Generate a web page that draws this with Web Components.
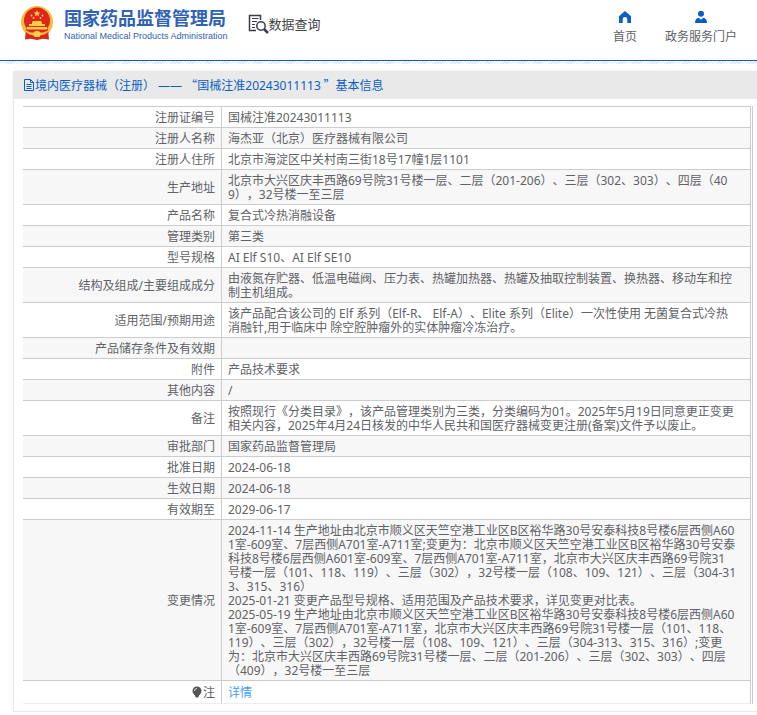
<!DOCTYPE html>
<html lang="zh-CN">
<head>
<meta charset="utf-8">
<meta name="viewport" content="width=device-width, initial-scale=1">
<title>国家药品监督管理局 数据查询</title>
<style>
	body {
		margin: 0;
		background: #fff;
		color: #606266;
		font: 12px/14px "Noto Sans", "Noto Sans CJK SC", sans-serif;
		text-spacing-trim: space-all;
	}
</style>
</head>
<body>
<site-header>
	<nav-link slot="nav" href="#home">
		<svg slot="icon" viewBox="0 0 14 14" width="14" height="14" fill="#0a5fc4"><path d="M7 1 1 6.2V13h3.7V9.3a2.3 2.3 0 0 1 4.6 0V13H13V6.2z"/></svg>
		首页
	</nav-link>
	<nav-link slot="nav" href="#portal">
		<svg slot="icon" viewBox="0 0 14 14" width="14" height="14" fill="#0a5fc4"><circle cx="7" cy="3.800" r="3"/><path d="M1 13c0-3.200 1.500-4.800 3.800-5.200L7 9.800l2.200-2C11.500 8.200 13 9.800 13 13z"/></svg>
		政务服务门户
	</nav-link>
</site-header>
<info-panel>
	<span slot="title">境内医疗器械（注册） —— <q-mark>“</q-mark>国械注准20243011113<q-mark>”</q-mark>基本信息</span>
	<info-table></info-table>
</info-panel>

<script>
const ROWS = [
	['注册证编号', '国械注准20243011113'],
	['注册人名称', '海杰亚（北京）医疗器械有限公司'],
	['注册人住所', '北京市海淀区中关村南三街18号17幢1层1101'],
	['生产地址', '北京市大兴区庆丰西路69号院31号楼一层、二层（201-206）、三层（302、303）、四层（409），32号楼一至三层'],
	['产品名称', '复合式冷热消融设备'],
	['管理类别', '第三类'],
	['型号规格', 'AI Elf S10、AI Elf SE10'],
	['结构及组成/主要组成成分', `由液氮存贮器、低温电磁阀、压力表、热罐加热器、热罐及抽取控制装置、换热器、移动车和控
制主机组成。`],
	['适用范围/预期用途', `该产品配合该公司的 Elf 系列（Elf-R、 Elf-A）、Elite 系列（Elite）一次性使用 无菌复合式冷热
消融针,用于临床中 除空腔肿瘤外的实体肿瘤冷冻治疗。`],
	['产品储存条件及有效期', ''],
	['附件', '产品技术要求'],
	['其他内容', '/'],
	['备注', `按照现行《分类目录》，该产品管理类别为三类，分类编码为01。2025年5月19日同意更正变更
相关内容，2025年4月24日核发的中华人民共和国医疗器械变更注册(备案)文件予以废止。`],
	['审批部门', '国家药品监督管理局'],
	['批准日期', '2024-06-18'],
	['生效日期', '2024-06-18'],
	['有效期至', '2029-06-17'],
	['变更情况', `2024-11-14 生产地址由北京市顺义区天竺空港工业区B区裕华路30号安泰科技8号楼6层西侧A60
1室-609室、7层西侧A701室-A711室;变更为：北京市顺义区天竺空港工业区B区裕华路30号安泰
科技8号楼6层西侧A601室-609室、7层西侧A701室-A711室，北京市大兴区庆丰西路69号院31
号楼一层（101、118、119）、三层（302），32号楼一层（108、109、121）、三层（304-31
3、315、316）
2025-01-21 变更产品型号规格、适用范围及产品技术要求，详见变更对比表。
2025-05-19 生产地址由北京市顺义区天竺空港工业区B区裕华路30号安泰科技8号楼6层西侧A60
1室-609室、7层西侧A701室-A711室，北京市大兴区庆丰西路69号院31号楼一层（101、118、
119）、三层（302），32号楼一层（108、109、121）、三层（304-313、315、316）;变更
为：北京市大兴区庆丰西路69号院31号楼一层、二层（201-206）、三层（302、303）、四层
（409），32号楼一至三层`],
];

// full-width quotation mark, always taken from the CJK font
class QMark extends HTMLElement {
	constructor() {
		super();
		this.attachShadow({ mode: 'open' }).innerHTML = `
    <style>
      :host { font-family: "Noto Sans CJK SC", sans-serif; }
    </style>
    <slot></slot>`;
	}
}

class NavLink extends HTMLElement {
	constructor() {
		super();
		this.attachShadow({ mode: 'open' }).innerHTML = `
    <style>
      :host { display: block; }

      a {
        display: flex;
        flex-direction: column;
        align-items: center;
        gap: 5px;
        color: inherit;
        line-height: 16px;
        text-decoration: none;
      }

      a:hover { color: #0a5fc4; }
    </style>
    <a><slot name="icon"></slot><span><slot></slot></span></a>`;
	}

	connectedCallback() {
		this.shadowRoot.querySelector('a').href = this.getAttribute('href');
	}
}

class SiteHeader extends HTMLElement {
	constructor() {
		super();
		this.attachShadow({ mode: 'open' }).innerHTML = `
    <style>
      :host { display: block; }

      header {
        display: flex;
        align-items: flex-start;
        box-sizing: border-box;
        height: 61px;
        padding: 0 20px;
        border-bottom: 1px solid #0064c8;
      }

      .hatch {
        height: 3px;
        background: repeating-linear-gradient(135deg, #fff 0 1px, #e4e4e4 1px 2px);
      }

      .brand {
        display: flex;
        gap: 10px;
        padding-top: 5px;
        color: #2f62b5;
        text-decoration: none;
      }

      .names { display: grid; align-content: start; padding-top: 2px; }
      .names b { font-size: 18px; line-height: 23px; }
      .names span { font: 9px/12px "Liberation Sans", sans-serif; }

      .query {
        display: flex;
        align-items: center;
        margin: 14px 0 0 20px;
        color: #444;
        font-size: 13px;
        line-height: 18px;
      }

      nav {
        display: flex;
        gap: 28px;
        margin-left: auto;
        padding-top: 10px;
      }
    </style>
    <header>
      <a class="brand" href="#top">
        <svg viewBox="0 0 34 36" width="34" height="36">
          <circle cx="17" cy="17" r="16" fill="#f3bd3c"/>
          <path d="M6 24 5 34.500l6-.8 6 1.300 6-1.300 6 .8-1-10.500z" fill="#d9261c"/>
          <circle cx="17" cy="15.500" r="13" fill="#e0251b"/>
          <path d="m17 5 .9 2.400h2.500l-2 1.500.8 2.500-2.200-1.500-2.200 1.500.8-2.500-2-1.500h2.500z" fill="#ffd84d"/>
          <g fill="#ffd84d"><circle cx="11.500" cy="10.500" r=".9"/><circle cx="13.500" cy="13" r=".9"/><circle cx="20.500" cy="13" r=".9"/><circle cx="22.500" cy="10.500" r=".9"/></g>
          <path d="M12 17.500 13 16h8l1 1.500v1.500h3v2H9v-2h3zM7 22h20v2.500H7z" fill="#f9cf48"/>
          <path d="M4 24c4 3 9 4 13 4s9-1 13-4c-2 5-7 6.500-13 6.500S6 29 4 24z" fill="#f3bd3c"/>
          <path d="M13 29a4 3 0 0 1 8 0l-1.500 3h-5z" fill="#f9cf48"/>
        </svg>
        <div class="names"><b>国家药品监督管理局</b><span>National Medical Products Administration</span></div>
      </a>
      <div class="query">
        <svg viewBox="0 0 21 20" width="21" height="20" fill="none" stroke="#3b3b4d">
          <path d="M8 16.500H1.500v-15h11V6" stroke-width="1.500"/>
          <path d="M4 4.500h6.500M4 7.500h5M4 10.500h3M4 13.500h3"/>
          <circle cx="13" cy="12" r="4.200" stroke-width="1.500"/>
          <path d="m16 15 4 4" stroke-width="2.500"/>
        </svg>
        <span>数据查询</span>
      </div>
      <nav><slot name="nav"></slot></nav>
    </header>
    <div class="hatch"></div>`;
	}
}

class InfoPanel extends HTMLElement {
	constructor() {
		super();
		this.attachShadow({ mode: 'open' }).innerHTML = `
    <style>
      :host {
        display: block;
        margin: 7px 0 0 13px;
        border: solid #e9e9e9;
        border-width: 0 0 1px 1px;
        box-shadow: 0 0 4px rgba(0,0,0,0.06);
      }

      h1 {
        display: flex;
        align-items: center;
        height: 28px;
        margin: 0;
        padding-left: 10px;
        background: #e9e9e9;
        color: #0a5fc4;
        font-size: 12px;
        font-weight: 400;
      }

      .body { padding: 7px 4px 7px 9px; }
    </style>
    <h1>
      <svg viewBox="0 0 11 12" width="11" height="12" fill="none" stroke="#0a5fc4"><path d="M.5.500h6l3 3v8h-9zM6.500.500v3h3M2.500 5.500h5M2.500 7.500h5M2.500 9.500h5"/></svg>
      <slot name="title"></slot>
    </h1>
    <div class="body"><slot></slot></div>`;
	}
}

class InfoTable extends HTMLElement {
	constructor() {
		super();
		this.attachShadow({ mode: 'open' });
		this.initHTML();
		ROWS.forEach(([label, text]) => this.addRow(label, text));
	}

	initHTML() {
		this.shadowRoot.innerHTML = `
    <style>
      :host {
        display: block;
        padding-right: 1px;
        border-right: 1px solid #ccc;
      }

      table {
        width: 100%;
        table-layout: fixed;
        border-spacing: 0;
        border-top: 1px solid #ccc;
        border-right: 1px solid #ccc;
      }

      th, td {
        height: 14px;
        padding: 4px 6px 2px;
        border-bottom: 1px solid #ccc;
        font-weight: 400;
        vertical-align: middle;
      }

      th {
        width: 186px;
        border-right: 1px solid #ccc;
        text-align: right;
      }

      td {
        white-space: pre-line;
        word-break: break-all;
      }

      tr:nth-child(even) { background: #f7f7f7; }

      tfoot th, tfoot td {
        height: 16px;
        border-bottom-color: #ebeef5;
      }

      tfoot svg { vertical-align: -1px; }

      a { color: #409eff; text-decoration: none; }
    </style>
    <table>
      <tbody></tbody>
      <tfoot>
        <tr>
          <th scope="row"><svg viewBox="0 0 11 12" width="11" height="12" fill="#555"><circle cx="5" cy="5" r="4.500"/><path d="M3 9h4v1L6 11.500H4L3 10z"/><path d="M2.500 5A2.500 2.500 0 0 1 5 2.500" fill="none" stroke="#ddd"/></svg>注</th>
          <td><a href="#detail">详情</a></td>
        </tr>
      </tfoot>
    </table>`;
	}

	addRow(label, text) {
		const row = this.shadowRoot.querySelector('tbody').insertRow();
		const th = document.createElement('th');
		th.scope = 'row';
		th.textContent = label;
		row.append(th);
		row.insertCell().textContent = text;
	}
}

customElements.define('q-mark', QMark);
customElements.define('nav-link', NavLink);
customElements.define('site-header', SiteHeader);
customElements.define('info-panel', InfoPanel);
customElements.define('info-table', InfoTable);
</script>
</body>
</html>
